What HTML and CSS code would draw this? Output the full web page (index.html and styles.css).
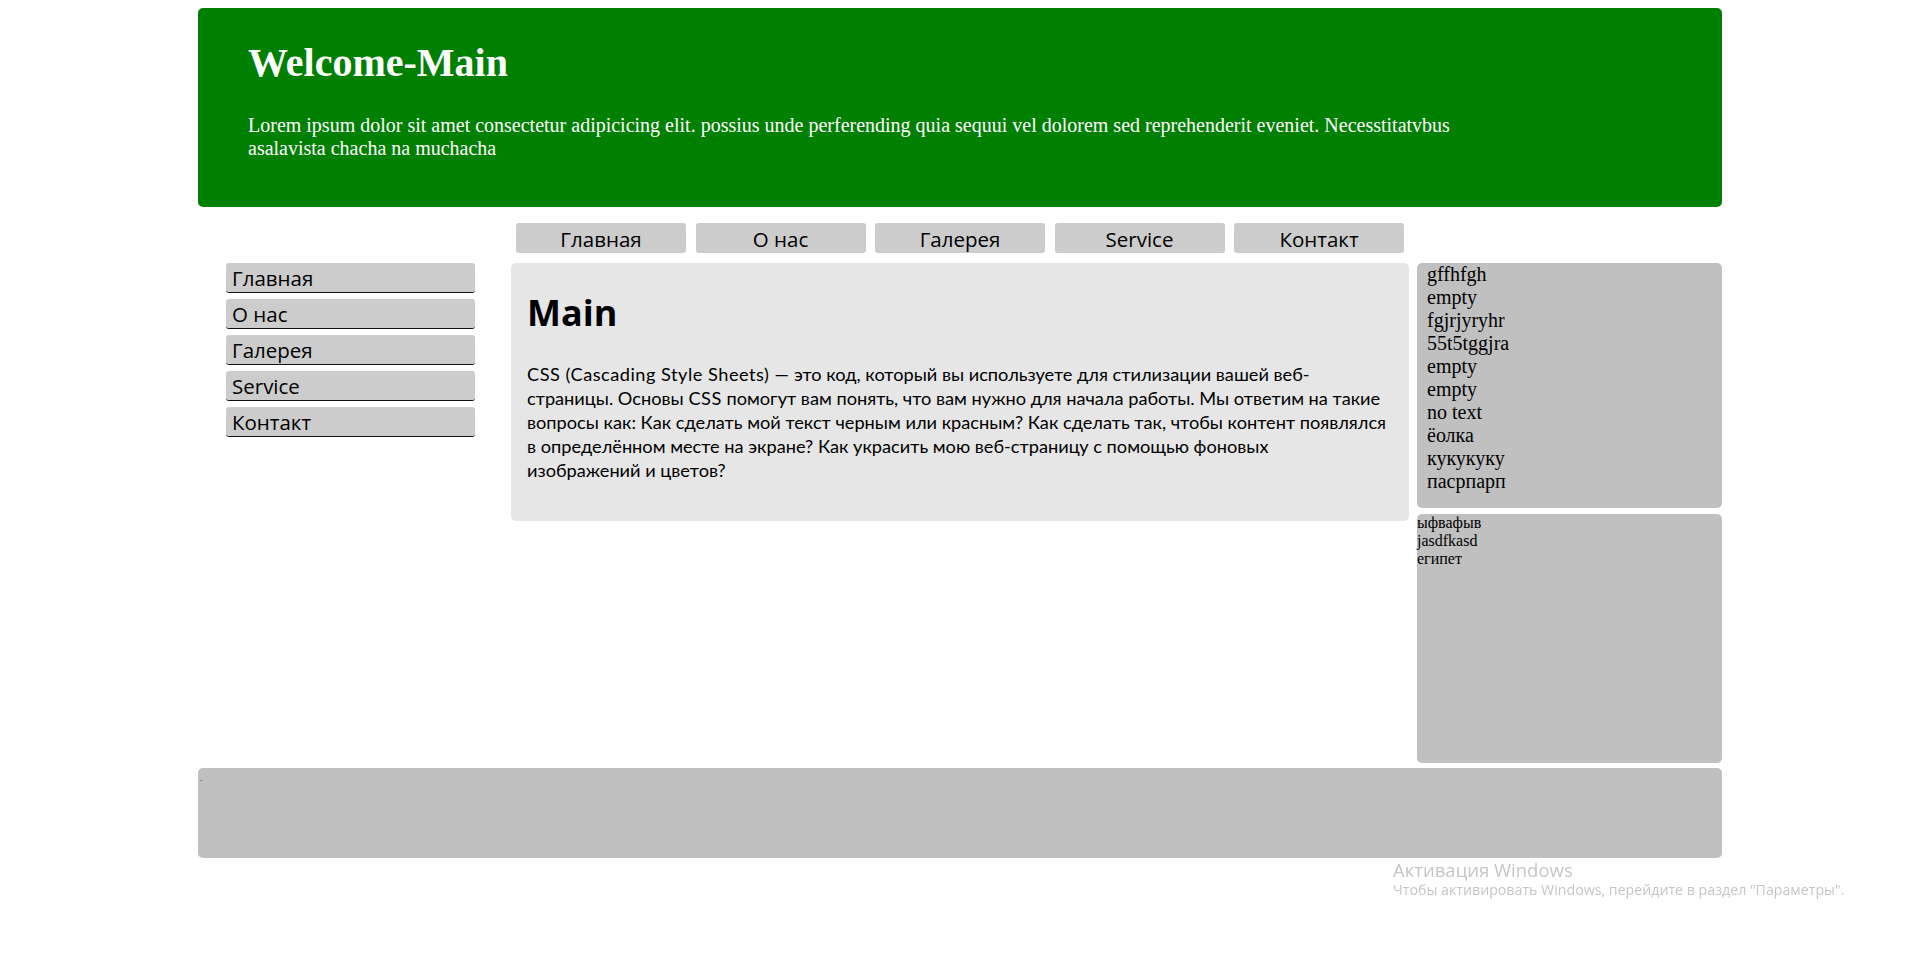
FILE: index.html
```html
<!DOCTYPE html>
<html lang="ru">
<head>
<meta charset="utf-8">
<title>Welcome-Main</title>
<link rel="stylesheet" href="styles.css">
</head>
<body>
<div class="page">
  <header class="hero">
    <h1 class="hero-title">Welcome-Main</h1>
    <p class="hero-text">Lorem ipsum dolor sit amet consectetur adipicicing elit. possius unde perferending quia sequui vel dolorem sed reprehenderit eveniet. Necesstitatvbus asalavista chacha na muchacha</p>
  </header>

  <div class="layout">
    <nav class="topnav">
      <a class="topnav-item" href="#">Главная</a>
      <a class="topnav-item" href="#">О нас</a>
      <a class="topnav-item" href="#">Галерея</a>
      <a class="topnav-item" href="#">Service</a>
      <a class="topnav-item" href="#">Контакт</a>
    </nav>

    <aside class="sidenav">
      <a class="sidenav-item" href="#">Главная</a>
      <a class="sidenav-item" href="#">О нас</a>
      <a class="sidenav-item" href="#">Галерея</a>
      <a class="sidenav-item" href="#">Service</a>
      <a class="sidenav-item" href="#">Контакт</a>
    </aside>

    <main class="content">
      <h2 class="content-title">Main</h2>
      <p class="content-text"><span class="latin">CSS (Cascading Style Sheets) —</span> это код, который вы используете для стилизации вашей веб-страницы. Основы <span class="latin">CSS</span> помогут вам понять, что вам нужно для начала работы. Мы ответим на такие вопросы как: Как сделать мой текст черным или красным? Как сделать так, чтобы контент появлялся в определённом месте на экране? Как украсить мою веб-страницу с помощью фоновых<br>изображений и цветов?</p>
    </main>

    <aside class="side">
      <ul class="side-list">
        <li>gffhfgh</li>
        <li>empty</li>
        <li>fgjrjyryhr</li>
        <li>55t5tggjra</li>
        <li>empty</li>
        <li>empty</li>
        <li>no text</li>
        <li>ёолка</li>
        <li>кукукуку</li>
        <li>пасрпарп</li>
      </ul>
      <div class="side-box">
        <div>ыфвафыв</div>
        <div>jasdfkasd</div>
        <div>египет</div>
      </div>
    </aside>
  </div>

  <footer class="footer"><span class="footer-mark">-</span></footer>
</div>

<div class="activation">
  <div class="activation-title">Активация Windows</div>
  <div class="activation-text">Чтобы активировать Windows, перейдите в раздел "Параметры".</div>
</div>
</body>
</html>
```

FILE: styles.css
```css
html, body {
  background: #ffffff;
}

body {
  margin: 8px 0 0 5px;
  font-family: "Liberation Serif", "Times New Roman", serif;
  color: #000;
}

.page {
  width: 1524px;
  margin: 0 auto;
}

/* Header */
.hero {
  background: #008000;
  color: #ffffff;
  border-radius: 5px;
  padding: 32px 50px 0 50px;
  height: 199px;
  box-sizing: border-box;
}

.hero-title {
  margin: 0;
  font-size: 40px;
  line-height: 46px;
  font-weight: bold;
}

.hero-text {
  margin: 28px 0 0 0;
  max-width: 1240px;
  font-size: 20px;
  line-height: 23px;
}

/* Layout grid */
.layout {
  display: grid;
  grid-template-columns: 305px 898px 305px;
  column-gap: 8px;
  row-gap: 10px;
  margin-top: 16px;
  align-items: start;
}

.topnav {
  grid-column: 2;
  grid-row: 1;
  display: flex;
  justify-content: space-between;
  padding: 0 5px;
}

.topnav-item {
  width: 170px;
  height: 30px;
  background: #cccccc;
  border-radius: 3px;
  color: #000;
  text-decoration: none;
  text-align: center;
  font-family: "Open Sans", "Noto Sans", sans-serif;
  font-size: 20.5px;
  line-height: 32px;
}

.sidenav {
  grid-column: 1;
  grid-row: 2;
  display: flex;
  flex-direction: column;
  gap: 6px;
  padding: 0 28px;
}

.sidenav-item {
  display: block;
  padding: 2px 0 0 6px;
  box-sizing: border-box;
  height: 30px;
  background: #cccccc;
  border-radius: 3px;
  border-bottom: 1px solid #111;
  color: #000;
  text-decoration: none;
  font-family: "Open Sans", "Noto Sans", sans-serif;
  font-size: 20.5px;
  line-height: 27px;
}

.content {
  grid-column: 2;
  grid-row: 2;
  background: #e6e6e6;
  border-radius: 5px;
  padding: 28px 16px 0 16px;
  height: 258px;
  box-sizing: border-box;
}

.content-title {
  margin: 0;
  font-family: "Open Sans", "Noto Sans", sans-serif;
  font-size: 36px;
  line-height: 44px;
  font-weight: 700;
}

.content-text {
  margin: 27px 0 0 0;
  font-family: Lato, "Open Sans", sans-serif;
  font-size: 18.2px;
  line-height: 24px;
}

.latin {
  letter-spacing: 0.5px;
}

.side {
  grid-column: 3;
  grid-row: 2;
  display: flex;
  flex-direction: column;
  gap: 6px;
}

.side-list {
  list-style: none;
  margin: 0;
  padding: 0 0 0 10px;
  height: 245px;
  box-sizing: border-box;
  background: #c0c0c0;
  border-radius: 5px;
  font-size: 20px;
  line-height: 23px;
}

.side-box {
  height: 249px;
  background: #c0c0c0;
  border-radius: 5px;
  font-size: 16px;
  line-height: 18px;
}

.footer {
  margin-top: 5px;
  height: 90px;
  background: #c0c0c0;
  border-radius: 5px;
  position: relative;
}

.footer-mark {
  position: absolute;
  left: 2px;
  top: 8px;
  font-size: 6px;
  line-height: 8px;
}

/* Windows watermark overlay */
.activation {
  position: fixed;
  left: 1393px;
  top: 859px;
  color: #c6c6c6;
  font-family: "Open Sans", "Noto Sans", sans-serif;
  white-space: nowrap;
}

.activation-title {
  font-size: 18.5px;
  line-height: 22px;
}

.activation-text {
  font-size: 14.2px;
  line-height: 18px;
}
```
